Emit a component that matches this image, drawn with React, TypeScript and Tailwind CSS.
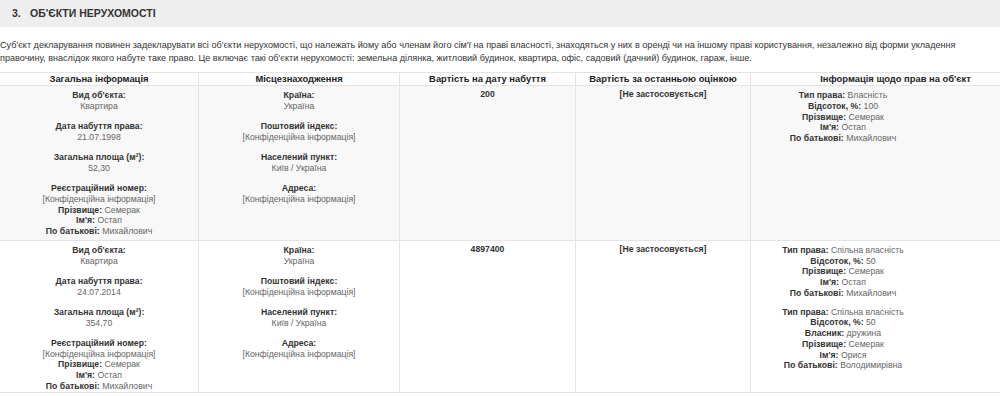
const cols = "grid grid-cols-[199px_201px_176px_175px_290px] w-[1041px]";

type Line = [string, string];

function Field({ label, value }: { label: string; value: string }) {
  return (
    <div className="mb-[9.5px]">
      <div className="font-bold text-[#333]">{label}</div>
      <div className="text-[#666]">{value}</div>
    </div>
  );
}

function Inline({ lines, className = "" }: { lines: Line[]; className?: string }) {
  return (
    <div className={className}>
      {lines.map(([label, value]) => (
        <div key={label}>
          <span className="font-bold text-[#333]">{label}</span>{" "}
          <span className="text-[#666]">{value}</span>
        </div>
      ))}
    </div>
  );
}

type Row = {
  kind: string;
  date: string;
  area: string;
  cost: string;
  rights: Line[][];
};

const rows: Row[] = [
  {
    kind: "Квартира",
    date: "21.07.1998",
    area: "52,30",
    cost: "200",
    rights: [
      [
        ["Тип права:", "Власність"],
        ["Відсоток, %:", "100"],
        ["Прізвище:", "Семерак"],
        ["Ім'я:", "Остап"],
        ["По батькові:", "Михайлович"],
      ],
    ],
  },
  {
    kind: "Квартира",
    date: "24.07.2014",
    area: "354,70",
    cost: "4897400",
    rights: [
      [
        ["Тип права:", "Спільна власність"],
        ["Відсоток, %:", "50"],
        ["Прізвище:", "Семерак"],
        ["Ім'я:", "Остап"],
        ["По батькові:", "Михайлович"],
      ],
      [
        ["Тип права:", "Спільна власність"],
        ["Відсоток, %:", "50"],
        ["Власник:", "дружина"],
        ["Прізвище:", "Семерак"],
        ["Ім'я:", "Орися"],
        ["По батькові:", "Володимирівна"],
      ],
    ],
  },
];

const headers = [
  "Загальна інформація",
  "Місцезнаходження",
  "Вартість на дату набуття",
  "Вартість за останньою оцінкою",
  "Інформація щодо прав на об'єкт",
];

export default function App() {
  return (
    <div className="h-[396px] w-[1000px] overflow-hidden bg-white font-['Liberation_Sans',Arial,sans-serif]">
      <div className="flex h-[27px] items-center bg-[#eeeeee] pl-[12px] pt-[1px] text-[10.5px] font-bold text-[#333]">
        <span className="w-[18px]">3.</span>
        <span>ОБ'ЄКТИ НЕРУХОМОСТІ</span>
      </div>

      <p className="mt-[12px] w-[1000px] text-[9.1px] leading-[13px] text-[#333]">
        Суб'єкт декларування повинен задекларувати всі об'єкти нерухомості, що належать йому або членам його сім'ї на
        праві власності, знаходяться у них в оренді чи на іншому праві користування, незалежно від форми укладення
        правочину, внаслідок якого набуте таке право. Це включає такі об'єкти нерухомості: земельна ділянка, житловий
        будинок, квартира, офіс, садовий (дачний) будинок, гараж, інше.
      </p>

      <div className="mt-[7px] text-center">
        <div className={`${cols} border-y border-[#e4e4e4]`}>
          {headers.map((h) => (
            <div
              key={h}
              className="border-r border-[#e4e4e4] py-[1px] text-[9.4px] leading-[10px] font-bold text-[#222]"
            >
              {h}
            </div>
          ))}
        </div>

        {rows.map((r, i) => (
          <div
            key={r.cost}
            className={`${cols} border-b border-[#e4e4e4] text-[8.7px] leading-[10.75px] ${
              i === 0 ? "bg-[#f8f8f8]" : "bg-white"
            }`}
          >
            <div className={`border-r border-[#e4e4e4] pt-[4px] ${i === 0 ? "pb-[3px]" : "pb-0"}`}>
              <Field label="Вид об'єкта:" value={r.kind} />
              <Field label="Дата набуття права:" value={r.date} />
              <Field label="Загальна площа (м²):" value={r.area} />
              <div className="font-bold text-[#333]">Реєстраційний номер:</div>
              <div className="text-[#666]">[Конфіденційна інформація]</div>
              <Inline lines={[["Прізвище:", "Семерак"], ["Ім'я:", "Остап"], ["По батькові:", "Михайлович"]]} />
            </div>
            <div className="border-r border-[#e4e4e4] pt-[4px]">
              <Field label="Країна:" value="Україна" />
              <Field label="Поштовий індекс:" value="[Конфіденційна інформація]" />
              <Field label="Населений пункт:" value="Київ / Україна" />
              <Field label="Адреса:" value="[Конфіденційна інформація]" />
            </div>
            <div className="border-r border-[#e4e4e4] pt-[3px] font-bold text-[#333]">{r.cost}</div>
            <div className="border-r border-[#e4e4e4] pt-[3px] font-bold text-[#333]">[Не застосовується]</div>
            <div className="border-r border-[#e4e4e4] pt-[4px] pr-[105px]">
              {r.rights.map((g, j) => (
                <Inline key={j} lines={g} className="mb-[8px] last:mb-0" />
              ))}
            </div>
          </div>
        ))}
      </div>
    </div>
  );
}
